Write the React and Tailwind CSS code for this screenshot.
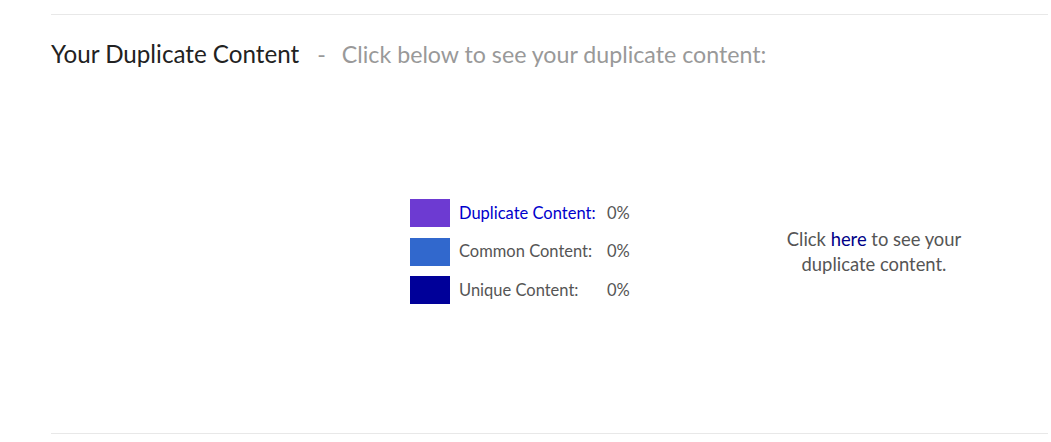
export default function App() {
  const rows = [
    { color: "bg-[#6d3ad2]", label: "Duplicate Content:", labelCls: "text-[#0000cc]" },
    { color: "bg-[#3168cd]", label: "Common Content:", labelCls: "text-[#555]" },
    { color: "bg-[#000099]", label: "Unique Content:", labelCls: "text-[#555]" },
  ];
  return (
    <div className="w-[1051px] h-[442px] bg-white font-['Lato','Noto_Sans',sans-serif] overflow-hidden">
      <div className="pt-[14px] pl-[51px]">
        <div className="border-t border-[#e8e8e8] h-[420px] flex flex-col border-b mr-[3px]">
          <div className="mt-[24px] flex items-baseline leading-[30px]">
            <span className="text-[#222] text-[24.2px]">Your Duplicate Content</span>
            <span className="text-[#999] text-[23.2px] ml-[18px]">-</span>
            <span className="text-[#999] text-[23.2px] ml-[16px]">Click below to see your duplicate content:</span>
          </div>
          <div className="flex mt-[130px]">
            <div className="ml-[359px] w-[230px] flex flex-col gap-[10.5px]">
              {rows.map((r) => (
                <div key={r.label} className="flex items-center h-[28px] text-[16.5px]">
                  <div className={`w-[40px] h-[28px] ${r.color}`} />
                  <span className={`ml-[9px] w-[148px] ${r.labelCls}`}>{r.label}</span>
                  <span className="text-[#555]">0%</span>
                </div>
              ))}
            </div>
            <div className="ml-[124px] w-[220px] mt-[28px] text-center text-[18.4px] leading-[25px] text-[#555]">
              <p>
                Click <span className="text-[#000088]">here</span> to see your
              </p>
              <p>duplicate content.</p>
            </div>
          </div>
        </div>
      </div>
    </div>
  );
}
